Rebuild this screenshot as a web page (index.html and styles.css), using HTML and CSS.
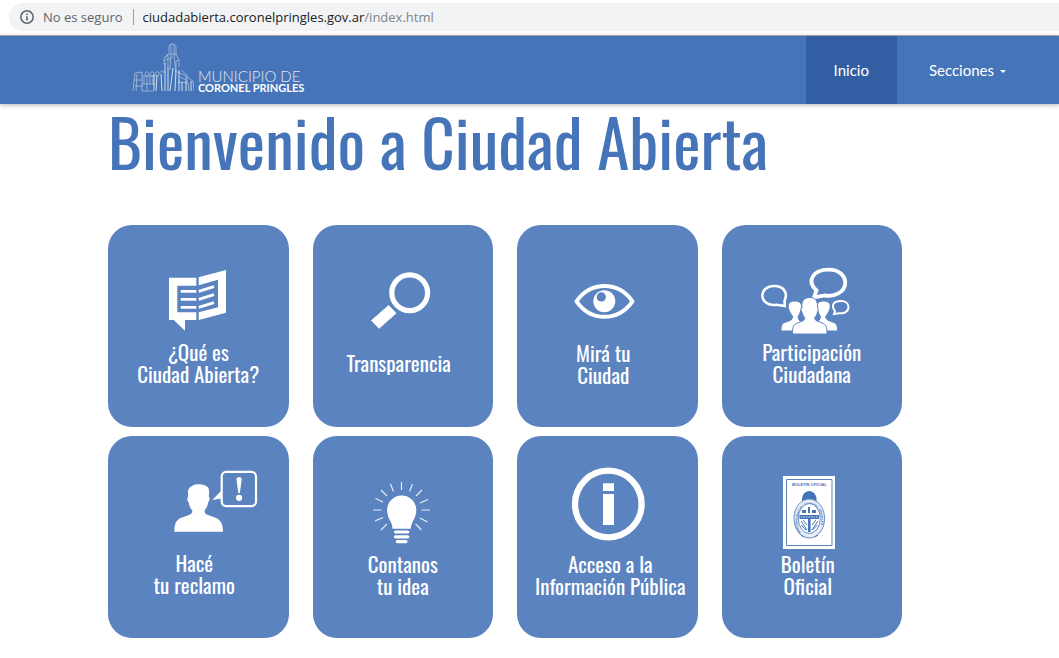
FILE: index.html
```html
<!DOCTYPE html>
<html lang="es">
<head>
<meta charset="utf-8">
<meta name="viewport" content="width=device-width, initial-scale=1">
<title>Ciudad Abierta - Coronel Pringles</title>
<link rel="stylesheet" href="styles.css">
</head>
<body>
<div class="address-bar">
  <div class="address">
    <svg class="address-icon" width="16" height="16" viewBox="0 0 16 16" aria-hidden="true"><circle cx="8" cy="8" r="6.2" fill="none" stroke="#5f6368" stroke-width="1.5"/><path d="M7.2 7.2h1.6v4.2H7.2zM7.2 4.5h1.6v1.6H7.2z" fill="#5f6368"/></svg>
    <span class="address-state">No es seguro</span>
    <span class="address-url">ciudadabierta.coronelpringles.gov.ar<span class="address-path">/index.html</span></span>
  </div>
</div>

<header class="site-header">
  <a class="brand" href="#">
    <svg class="brand-mark" width="62" height="50" viewBox="0 0 62 50" fill="none" stroke="#fff" aria-hidden="true">
      <g stroke-width=".8" opacity=".55">
        <path d="M37 10V3l2-2h3l2 3v8M39 1v10M42 1v12M36 11l-4 4v6M36 11h8l3 6v7M32 15l4-3v12M39 11l-1 16M42 12l2 18M47 17l-3 1v9M32 18l4-2M36 17l5-3"/>
        <path d="M3 30l7-1v19M3 30L1 48M5 31l-1 17M10 33h13M10 41h13M3 37h7M3 43h8"/>
        <path d="M13 31c1-3 4-3 4 0s-4 3-4 0zM18 31c1-3 4-3 4 0s-4 3-4 0zM23 31c1-3 4-3 4 0s-4 3-4 0zM28 30c1-3 4-3 4 0"/>
        <path d="M12 34v7M15 34v14M18 34v7M21 34v7M10 48h12M46 29l8 4v6M49 27l6 5v7M55 34l6 4 1 10M46 39l10 1 1 8M48 34l6 3"/>
      </g>
      <g stroke-width="1" opacity=".75">
        <path d="M22 32v15M25 32l-1 16M29 31l1 17M33 20v28M36 24v24M41 25l-3 23M44 27l-1 21M47 27v21M50 39v9M54 38v10M59 38v10"/>
      </g>
    </svg>
    <span class="brand-text"><span class="brand-top">MUNICIPIO DE</span><span class="brand-name">CORONEL PRINGLES</span></span>
  </a>
  <nav class="menu">
    <a class="menu-item menu-item--active" href="#">Inicio</a>
    <a class="menu-item" href="#">Secciones<span class="caret"></span></a>
  </nav>
</header>

<main class="content">
  <h1 class="title">Bienvenido a Ciudad Abierta</h1>
  <div class="tiles">
    <a class="tile" href="#">
      <svg class="tile-icon" viewBox="0 0 180 114" aria-hidden="true">
        <path fill="#fff" d="M61 52.7h27.3v8h-19v26.6h19V95H77v10.7L65.7 95H61zM90.7 52.3L118 45v42.7L90.7 95v-7.7l19.3-5V54.7l-19.3 5.6z"/>
        <path stroke="#fff" stroke-width="2.8" fill="none" d="M72.7 66.3h15.6M72.7 74.3h15.6M72.7 82.3h15.6M90.7 66.3l15.3-4.6M90.7 74.3l15.3-4.6M90.7 82.3l15.3-4.6"/>
      </svg>
      <span class="tile-label tile-label--high">¿Qué es<br>Ciudad Abierta?</span>
    </a>
    <a class="tile" href="#">
      <svg class="tile-icon" viewBox="0 0 180 114" aria-hidden="true">
        <circle cx="96.700" cy="67.700" r="17.900" fill="none" stroke="#fff" stroke-width="5.200"/>
        <path fill="#fff" stroke="#fff" stroke-linejoin="round" d="M75.700 80.500l7.200 7.800L66 103.300l-7.400-7.800z"/>
      </svg>
      <span class="tile-label tile-label--single tile-label--left">Transparencia</span>
    </a>
    <a class="tile" href="#">
      <svg class="tile-icon" viewBox="0 0 180 114" aria-hidden="true">
        <path fill="none" stroke="#fff" stroke-width="4" stroke-linejoin="round" d="M59.500 76.300C74 56 101 56 115.500 76.300C101 97 74 97 59.500 76.300z"/>
        <circle cx="87.300" cy="76.300" r="11" fill="#fff"/><circle cx="84.300" cy="71.900" r="4.600" fill="#5a83bf"/>
      </svg>
      <span class="tile-label tile-label--left">Mirá tu<br>Ciudad</span>
    </a>
    <a class="tile" href="#">
      <svg class="tile-icon" viewBox="0 0 180 114" aria-hidden="true">
        <g fill="none" stroke="#fff">
          <path stroke-width="3.800" d="M94.500 65.500C84 56 91 44.700 106.700 44.700C117 44.700 123.200 50.500 123.200 57.800C123.200 67 113 72 103 70.500L92 72.400z"/>
          <path stroke-width="2.600" d="M62.500 76C66.500 67 61 61 52.300 61C45 61 40.300 65 40.300 70.300C40.300 77 47 81 54.500 79.700L62.800 81z"/>
          <path stroke-width="2" d="M113 86.300C108.500 80 112 76 119 76C123.500 76 126.500 78.500 126.500 82C126.500 86.500 122 89 117.500 88.200L112 89z"/>
        </g>
        <g fill="#fff" stroke="#5a83bf" stroke-width="1">
          <path d="M59 106c0-6 1-8 5-9l5-2 2-3c-8-11-5-16 2-16s9 5 3 16l1 3 6 3v8z"/>
          <path d="M115.500 106c0-6-1-8-5-9l-5-2-2-3c8-11 5-16-2-16s-9 5-3 16l-1 3-6 3v8z"/>
          <path d="M70.500 109c0-8 1-9.500 5-11l6-2.500 1.500-2.500c-2-2-2.500-4-3-6-1.500-1-1-4 0-4-1-7 2-10.500 8-10.500 6 0 8 4.500 7.500 10.500 1 0 1 3 0 4-.5 2-1 4-3 6l1.500 2.500 6 2.500c4 1.500 5 3 5 11z"/>
        </g>
      </svg>
      <span class="tile-label tile-label--high">Participación<br>Ciudadana</span>
    </a>
    <a class="tile" href="#">
      <svg class="tile-icon" viewBox="0 0 180 114" aria-hidden="true">
        <path fill="#fff" d="M66.300 95.800c0-8 2-12 7-14l7-2.500c3-1.200 4-2 4-5-2.500-2.500-3.300-5-3.600-8-1.800-1-1.800-5-.5-5.500-.8-7 .5-9.500 4-10.800 2-2.500 14-2.500 16.300 2.300 1 3 .6 5.500.3 8.500 1.200.5 1 4.500-.7 5.500-.3 3-1.300 5.500-3.500 8 0 3 1 3.800 4 5l7 2.500c5 2 7.400 6 7.400 14z"/>
        <rect x="113.700" y="35.900" width="34.300" height="34.200" rx="4.500" fill="none" stroke="#fff" stroke-width="2.200"/>
        <path fill="#fff" d="M104.300 63.900L113 55v7.500zM128.500 43.500c0-3.300 5.200-3.300 5.200 0l-1.800 13.500h-1.600z"/><circle cx="131.100" cy="61.800" r="3.100" fill="#fff"/>
      </svg>
      <span class="tile-label tile-label--high tile-label--left">Hacé<br>tu reclamo</span>
    </a>
    <a class="tile" href="#">
      <svg class="tile-icon" viewBox="0 0 180 114" aria-hidden="true">
        <path fill="#fff" d="M79.500 92.700c0-7-5.400-10-5.400-18.700a14.600 14.600 0 0 1 29.200 0c0 8.700-5.400 11.700-5.400 18.700z"/>
        <path stroke="#fff" stroke-width="3.200" stroke-linecap="round" d="M82.500 96h12.300M82.500 100.800h12.300M84.300 105.600h8.700"/>
        <path stroke="#fff" stroke-width="1.200" opacity=".85" d="M88.500 46v8M77.500 48l3 7.500M99.500 48l-3 7.500M68 54l6 6M109 54l-6 6M62.500 62.500l7.500 3.500M115 63.500l-8 3.500M60 74h8.500M108.500 74h8.500M62 85l8-3.500M114.500 86l-7.500-4M68 94l6-6M108.500 94l-6-6"/>
      </svg>
      <span class="tile-label">Contanos<br>tu idea</span>
    </a>
    <a class="tile" href="#">
      <svg class="tile-icon" viewBox="0 0 180 114" aria-hidden="true">
        <circle cx="91.300" cy="68" r="33.300" fill="none" stroke="#fff" stroke-width="6.300"/>
        <path fill="#fff" d="M86 47.300h11V55H86zM86 58h11v31H86z"/>
      </svg>
      <span class="tile-label tile-label--right">Acceso a la<br>Información Pública</span>
    </a>
    <a class="tile" href="#">
      <svg class="tile-icon" viewBox="0 0 180 114" aria-hidden="true">
        <path fill="#fff" d="M61 40h52v73H61z"/>
        <path fill="none" stroke="#5a83bf" d="M64.500 43.500h45.500v66H64.500z"/>
        <text class="gazette-title" x="87.300" y="50.300">BOLETIN OFICIAL</text>
        <path fill="#4674b8" d="M80 65c-1-13.500 15.500-13.500 14.500 0z"/>
        <ellipse cx="87.300" cy="82.500" rx="15.300" ry="19.500" fill="#e5ecf6" stroke="#4674b8" stroke-width=".8"/>
        <path id="seal" fill="none" d="M79 97A12 16.500 0 1 1 95.700 97"/>
        <text class="gazette-seal"><textPath href="#seal">MUNICIPALIDAD DE CORONEL PRINGLES</textPath></text>
        <ellipse cx="87.300" cy="82.500" rx="11" ry="15" fill="#fff" stroke="#4674b8" stroke-width=".8"/>
        <path fill="#4674b8" d="M77.500 79h19.500v4H77.500zM86 83h2.600v13H86zM80 74h4v3h-4zM90 74h4v3h-4zM86 71h2v6h-2z"/>
        <path fill="none" stroke="#4674b8" stroke-width="1" d="M79 85l6 9M81 84l4 5M96 85l-6 9M94 84l-4 5M79 89l5 5M95.500 89l-5 5M79 99l3 2M96 99l-3 2"/>
        <path stroke="#fff" stroke-width=".8" stroke-dasharray="1.500 1" d="M79 81h17"/>
      </svg>
      <span class="tile-label tile-label--left">Boletín<br>Oficial</span>
    </a>
  </div>
</main>
</body>
</html>
```
FILE: styles.css
```css
* { box-sizing: border-box; }
body { margin: 0; background: #fff; font-family: Lato, "Liberation Sans", sans-serif; }
a { color: inherit; text-decoration: none; }

.address-bar { padding: 3px 0 4px 9px; border-bottom: 1px solid #b5b5b1; }
.address {
  display: flex; align-items: center; height: 28px; padding-left: 10px;
  border-radius: 14px 0 0 14px; background: #f1f3f4;
  font: 13px/20px "Open Sans", "Noto Sans", sans-serif; white-space: nowrap;
}
.address-icon { flex: none; margin-right: 8px; }
.address-state { padding-right: 10px; color: #5f6368; }
.address-url { padding-left: 9px; border-left: 1px solid #9aa0a6; line-height: 16px; color: #202124; }
.address-path { color: #80868b; }

.site-header {
  display: flex; justify-content: space-between; height: 68px; padding: 0 21px 0 132px;
  background: #4674b8; color: #fff; box-shadow: 0 1px 5px rgba(0, 0, 0, .3);
}
.brand { display: flex; align-items: flex-start; gap: 4px; padding-top: 7px; }
.brand-text { display: flex; flex-direction: column; padding-top: 27px; white-space: nowrap; }
.brand-top { font-size: 15px; line-height: 13px; font-weight: 300; opacity: .85; }
.brand-name { font-size: 11px; line-height: 9px; font-weight: 700; }
.menu { display: flex; }
.menu-item { display: flex; align-items: center; padding: 0 32px; font-size: 15px; line-height: 20px; }
.menu-item--active { padding: 0 28px; background: #325fa4; }
.caret { margin: 2px 0 0 6px; border: 3px solid transparent; border-top-color: #fff; border-bottom: 0; }

.content { padding: 0 157px 20px 108px; }
.title {
  margin: 0; padding: 0 0 47px; color: #4674b8; white-space: nowrap;
  font: 400 65px/74px Oswald, "Liberation Sans Narrow", "Arial Narrow", "Liberation Sans", sans-serif;
}
.tiles { display: grid; grid-template-columns: repeat(4, 1fr); gap: 9px 24px; }
.tile {
  display: flex; flex-direction: column; min-height: 202px;
  border-radius: 24px; background: #5a83bf; color: #fff;
  font: 21px/22px Oswald, "Liberation Sans Narrow", "Arial Narrow", "Liberation Sans", sans-serif;
}
.tile-icon { display: block; width: 180px; height: 114px; }
.tile-label { padding-top: 3px; text-align: center; white-space: nowrap; }
.tile-label--high { padding-top: 2px; }
.tile-label--single { padding-top: 13px; }
.tile-label--left { padding-right: 8px; }
.tile-label--right { padding-left: 6px; }
.gazette-title { font: 700 4px "Liberation Sans", sans-serif; fill: #4674b8; text-anchor: middle; }
.gazette-seal { font: 700 3px "Liberation Sans", sans-serif; fill: #4674b8; }
```
